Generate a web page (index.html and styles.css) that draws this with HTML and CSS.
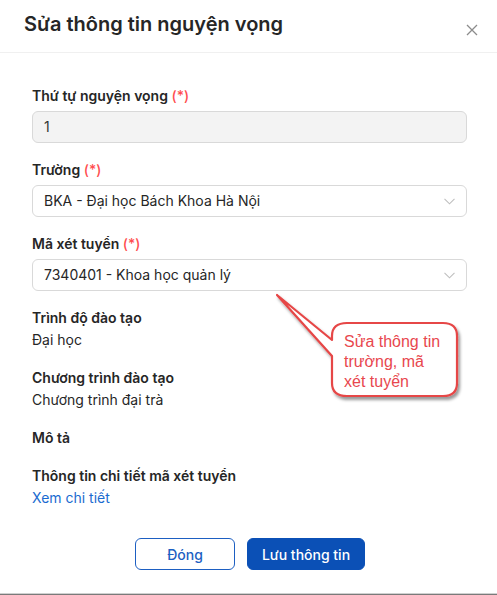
FILE: index.html
```
<!DOCTYPE html>
<html lang="vi">
<head>
<meta charset="utf-8">
<link rel="stylesheet" href="styles.css">
</head>
<body>
<div class="modal">
  <div class="modal-header">
    <h1 class="title">Sửa thông tin nguyện vọng</h1>
    <svg class="close" width="12" height="12" viewBox="0 0 12 12"><path d="M1 1L11 11M11 1L1 11" stroke="#8c8c8c" stroke-width="1.3" fill="none"/></svg>
  </div>
  <div class="modal-body">
    <div class="field">
      <div class="label">Thứ tự nguyện vọng <span class="req">(*)</span></div>
      <div class="input disabled">1</div>
    </div>
    <div class="field">
      <div class="label">Trường <span class="req">(*)</span></div>
      <div class="input select"><span>BKA - Đại học Bách Khoa Hà Nội</span>
        <svg class="chev" width="11" height="7" viewBox="0 0 11 7"><path d="M0.5 0.8L5.5 5.8L10.5 0.8" stroke="#bfbfbf" stroke-width="1.1" fill="none"/></svg></div>
    </div>
    <div class="field">
      <div class="label">Mã xét tuyển <span class="req">(*)</span></div>
      <div class="input select"><span>7340401 - Khoa học quản lý</span>
        <svg class="chev" width="11" height="7" viewBox="0 0 11 7"><path d="M0.5 0.8L5.5 5.8L10.5 0.8" stroke="#bfbfbf" stroke-width="1.1" fill="none"/></svg></div>
    </div>
    <div class="field">
      <div class="label">Trình độ đào tạo</div>
      <div class="value">Đại học</div>
    </div>
    <div class="field">
      <div class="label">Chương trình đào tạo</div>
      <div class="value">Chương trình đại trà</div>
    </div>
    <div class="field">
      <div class="label">Mô tả</div>
    </div>
    <div class="field">
      <div class="label">Thông tin chi tiết mã xét tuyển</div>
      <a class="link">Xem chi tiết</a>
    </div>
  </div>
  <div class="modal-footer">
    <button class="btn btn-outline">Đóng</button>
    <button class="btn btn-primary">Lưu thông tin</button>
  </div>
</div>
<div class="bottom-edge"></div>

<div class="callout">
  <svg class="callout-shape" width="200" height="120" viewBox="0 0 200 120">
    <defs>
      <filter id="sh" x="-20%" y="-20%" width="140%" height="140%">
        <feDropShadow dx="2" dy="3" stdDeviation="1.5" flood-color="#000" flood-opacity="0.4"/>
      </filter>
    </defs>
    <path filter="url(#sh)" d="M77 33 Q62 33 62 46 L62 50 L7 5 L62 66 L62 93 Q62 106 77 106 L173 106 Q187 106 187 93 L187 46 Q187 33 173 33 Z" fill="#fff" stroke="#e64646" stroke-width="2.2" stroke-linejoin="round"/>
  </svg>
  <div class="callout-text">Sửa thông tin<br>trường, mã<br>xét tuyển</div>
</div>
</body>
</html>
```
FILE: styles.css
```
* { box-sizing: border-box; }
html, body { margin: 0; padding: 0; background: #fff; }
body {
  font-family: Inter, "Noto Sans", sans-serif;
  color: #262626;
  width: 497px;
  height: 595px;
  position: relative;
  overflow: hidden;
}
.modal { display: flex; flex-direction: column; height: 593px; }
.modal-header {
  height: 53px;
  border-bottom: 1px solid #f0f0f0;
  display: flex;
  align-items: center;
  justify-content: space-between;
  padding: 0 19px 2px 24px;
}
.title {
  margin: 0;
  font-size: 20px;
  font-weight: 600;
  color: #262626;
  line-height: 24px;
  margin-top: -3px;
}
.close { margin-top: 10px; }
.modal-body {
  padding: 32px 30px 0 32px;
  display: flex;
  flex-direction: column;
  gap: 16px;
}
.label {
  font-size: 14px;
  font-weight: 600;
  line-height: 22px;
  color: #262626;
}
.req { color: #ff4d4f; font-weight: 500; }
.field .input { margin-top: 4px; }
.input {
  height: 32px;
  border: 1px solid #d9d9d9;
  border-radius: 6px;
  padding: 0 11px;
  font-size: 14px;
  line-height: 30px;
  color: #262626;
  display: flex;
  align-items: center;
  justify-content: space-between;
}
.input.disabled { background: #f3f3f3; color: #333; }
.value { font-size: 14px; line-height: 22px; color: #262626; }
.link { font-size: 14px; line-height: 22px; color: #1a6bd0; display: block; }
.modal-footer {
  margin-top: 29px;
  display: flex;
  justify-content: center;
  gap: 12px;
  padding-left: 3px;
}
.btn {
  height: 32px;
  border-radius: 6px;
  font-family: Inter, "Noto Sans", sans-serif;
  font-size: 14px;
  font-weight: 500;
  padding: 0;
}
.btn-outline {
  width: 100px;
  background: #fff;
  border: 1px solid #1d5fc2;
  color: #1d5fc2;
}
.btn-primary {
  width: 118px;
  background: #0b50b6;
  border: 1px solid #0b50b6;
  color: #fff;
}
.bottom-edge {
  height: 2px;
  border-top: 1px solid #d0d0d0;
  background: #7a7a7a;
}
.callout {
  position: absolute;
  left: 270px;
  top: 290px;
  width: 200px;
  height: 120px;
}
.callout-shape { position: absolute; left: 0; top: 0; }
.callout-text {
  position: absolute;
  left: 74px;
  top: 42px;
  font-family: "Liberation Sans", Arial, sans-serif;
  font-size: 16px;
  line-height: 20px;
  color: #e8474e;
}
```
